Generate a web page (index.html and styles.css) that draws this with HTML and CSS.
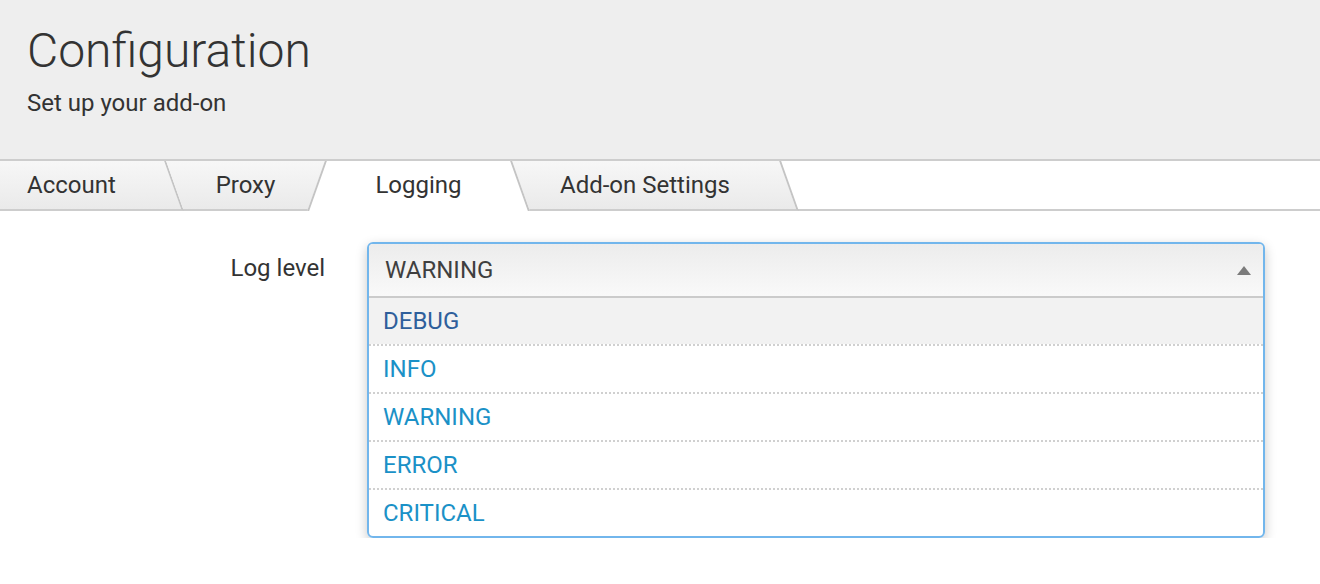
FILE: index.html
```html
<!DOCTYPE html>
<html lang="en">
  <head>
    <meta charset="UTF-8">
    <meta name="viewport" content="width=device-width, initial-scale=1">
    <title>Configuration</title>
    <link rel="stylesheet" href="styles.css">
  </head>
  <body>
    <div class="page-header">
      <h1>Configuration</h1>
      <p>Set up your add-on</p>
    </div>
    <ul class="tabs">
      <li class="tab tab-account"><span>Account</span></li>
      <li class="tab tab-proxy"><span>Proxy</span></li>
      <li class="tab tab-logging active"><span>Logging</span></li>
      <li class="tab tab-settings"><span>Add-on Settings</span></li>
    </ul>
    <div class="form">
      <label class="form-label">Log level</label>
      <div class="select open">
        <div class="select-current">
          <span>WARNING</span>
          <i class="select-arrow"></i>
        </div>
        <ul class="select-options">
          <li class="highlighted">DEBUG</li>
          <li>INFO</li>
          <li>WARNING</li>
          <li>ERROR</li>
          <li>CRITICAL</li>
        </ul>
      </div>
    </div>
  </body>
</html>
```

FILE: styles.css
```css
html, body {
  margin: 0;
  background-color: #fff;
  color: #333;
  font-family: Roboto, "Helvetica Neue", Arial, sans-serif;
}

.page-header {
  height: 159px;
  box-sizing: border-box;
  padding: 22px 27px 0;
  background-color: #eee;
}

.page-header h1 {
  margin: 0;
  font-size: 48px;
  font-weight: 300;
  line-height: 58px;
}

.page-header p {
  margin: 9px 0 0;
  font-size: 24px;
  line-height: 28px;
}

/* tabs: skewed pseudo elements draw the slanted backgrounds */
.tabs {
  display: flex;
  align-items: flex-start;
  list-style: none;
  margin: 0;
  padding: 0;
  height: 48px;
  border-top: 2px solid #cdcdcd;
  border-bottom: 2px solid #cdcdcd;
  background-color: #fff;
}

.tab {
  position: relative;
  z-index: 1;
  display: flex;
  align-items: center;
  box-sizing: border-box;
  height: 50px;
  margin-bottom: -2px;
  padding-bottom: 2px;
  font-size: 24px;
  color: #333;
}

.tab::before {
  content: "";
  position: absolute;
  top: 0;
  right: 0;
  bottom: 0;
  left: 0;
  z-index: -1;
  background: linear-gradient(#f7f7f7, #eaeaea);
  border-right: 2px solid #c4c4c4;
  border-bottom: 2px solid #cdcdcd;
  transform: skewX(19.5deg);
}

.tab-account {
  width: 175px;
  padding-left: 27px;
}

.tab-account::before {
  left: -30px;
}

.tab-proxy {
  width: 141px;
  justify-content: center;
}

.tab-proxy::before {
  right: -30px;
}

.tab-logging {
  width: 205px;
  justify-content: center;
}

.tab-settings {
  width: 269px;
  padding-left: 39px;
}

.tab.active {
  z-index: 2;
}

.tab.active::before {
  right: 40%;
  background: #fff;
  border-left: 2px solid #c4c4c4;
  border-right: 0;
  border-bottom: 0;
  transform: skewX(-19.5deg);
}

.tab.active::after {
  content: "";
  position: absolute;
  top: 0;
  right: 0;
  bottom: 0;
  left: 40%;
  z-index: -1;
  background: #fff;
  border-right: 2px solid #c4c4c4;
  transform: skewX(19.5deg);
}

/* form */
.form {
  display: grid;
  grid-template-columns: 325px 898px;
  column-gap: 42px;
  align-items: start;
  padding-top: 31px;
}

.form-label {
  font-size: 24px;
  line-height: 52px;
  text-align: right;
}

.select {
  border: 2px solid #72b6ec;
  border-radius: 6px;
  box-shadow: 0 4px 12px rgba(0, 0, 0, 0.22);
  overflow: hidden;
}

.select-current {
  display: flex;
  align-items: center;
  justify-content: space-between;
  height: 52px;
  padding: 0 12px 0 16px;
  background: linear-gradient(#ececec, #f9f9f9);
  border-bottom: 2px solid #cbcbcb;
  font-size: 24px;
  color: #3f3f3f;
}

.select-arrow {
  width: 0;
  height: 0;
  border-left: 7px solid transparent;
  border-right: 7px solid transparent;
  border-bottom: 9px solid #7b7b7b;
}

.select-options {
  list-style: none;
  margin: 0;
  padding: 0;
}

.select-options li {
  height: 46px;
  padding-left: 14px;
  border-top: 2px dotted #d0d0d0;
  font-size: 24px;
  line-height: 46px;
  color: #1b91c7;
}

.select-options li:first-child {
  border-top: 0;
}

.select-options li.highlighted {
  background-color: #f2f2f2;
  color: #2f5f9b;
}
```
